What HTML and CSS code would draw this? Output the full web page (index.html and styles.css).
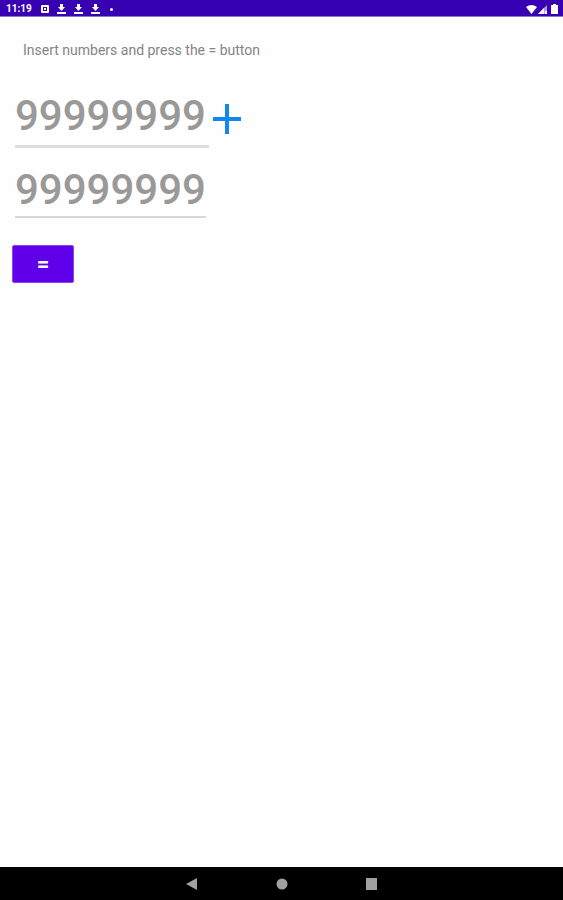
FILE: index.html
```html
<!DOCTYPE html>
<html lang="en">
<head>
<meta charset="utf-8">
<meta name="viewport" content="width=device-width, initial-scale=1">
<title>Calculator</title>
<link rel="stylesheet" href="styles.css">
</head>
<body>
<header class="status">
  <span class="time">11:19</span>
  <svg class="notifications" width="74" height="10" viewBox="0 0 74 10" aria-hidden="true">
    <path fill-rule="evenodd" d="M2 1h6q1 0 1 1v6q0 1-1 1H2q-1 0-1-1V2q0-1 1-1zM3 3v4h4V3z"/>
    <path d="M4 4h2v2H4z"/>
    <path d="M20 0h3v3h2l-3.500 4L18 3h2zM17 8h9v2h-9z"/>
    <path d="M37 0h3v3h2l-3.500 4L35 3h2zM34 8h9v2h-9z"/>
    <path d="M54 0h3v3h2l-3.500 4L52 3h2zM51 8h9v2h-9z"/>
    <circle cx="71.500" cy="5.500" r="1.500"/>
  </svg>
  <svg class="system" width="34" height="10" viewBox="0 0 34 10" aria-hidden="true">
    <path d="M1 3q5.500-4 11 0L6.500 10z"/>
    <path opacity=".6" d="M13 10l9-9v9z"/>
    <path d="M13 10l6-6v6zM20 7h2v3h-2z"/>
    <path d="M26 1h2V0h3v1h2v9h-7z"/>
  </svg>
</header>
<main class="content">
  <p class="hint">Insert numbers and press the = button</p>
  <div class="row">
    <input class="number first" type="text" inputmode="numeric" placeholder="99999999" aria-label="First number">
    <svg class="plus" width="28" height="30" viewBox="0 0 28 30" role="img" aria-label="plus"><path d="M12 0h4v13h12v4H16v13h-4V17H0v-4h12z"/></svg>
  </div>
  <input class="number second" type="text" inputmode="numeric" placeholder="99999999" aria-label="Second number">
  <button class="equals" type="button">=</button>
</main>
<nav class="navbar">
  <button type="button" aria-label="Back"><svg width="12" height="12" viewBox="0 0 12 12"><path d="M0 6l11-6v12z"/></svg></button>
  <button type="button" aria-label="Home"><svg width="12" height="12" viewBox="0 0 12 12"><circle cx="6" cy="6" r="5.500"/></svg></button>
  <button type="button" aria-label="Recent apps"><svg width="12" height="12" viewBox="0 0 12 12"><path d="M0 0h11v12H0z"/></svg></button>
</nav>
</body>
</html>
```

FILE: styles.css
```css
* {
  box-sizing: border-box;
}

body {
  margin: 0;
  min-height: 100vh;
  display: flex;
  flex-direction: column;
  background: #fefefe;
  font-family: Roboto, "Liberation Sans", sans-serif;
}

.status {
  height: 17px;
  display: flex;
  align-items: center;
  gap: 8px;
  padding: 1px 4px 0 6px;
  background: #3700b3;
  border-bottom: 1px solid #8f75d2;
  color: #fff;
  fill: #fff;
}

.time {
  font-size: 10px;
  line-height: 16px;
  font-weight: 700;
}

.system {
  margin-left: auto;
}

.content {
  flex: 1;
  display: flex;
  flex-direction: column;
  align-items: flex-start;
  padding: 23px 12px;
}

.hint {
  margin: 0 0 32px 11px;
  font-size: 14px;
  line-height: 20px;
  color: #858585;
}

.row {
  display: flex;
  align-items: flex-start;
  gap: 4px;
}

.number {
  display: block;
  margin: 0 0 0 3px;
  padding: 0;
  border: 0;
  border-radius: 0;
  background: transparent;
  font: 500 42px/48px Roboto, "Liberation Sans", sans-serif;
  color: #666;
  outline: 0;
}

.number::placeholder {
  color: #999;
  opacity: 1;
}

.first {
  width: 194px;
  height: 56px;
  padding-bottom: 6px;
  border-bottom: 3px solid #dedede;
}

.second {
  width: 191px;
  height: 52px;
  margin-top: 18px;
  padding-bottom: 3px;
  border-bottom: 2px solid #d8d8d8;
}

.plus {
  margin-top: 12px;
  fill: #1088f0;
}

.equals {
  width: 62px;
  height: 38px;
  margin-top: 27px;
  padding: 0;
  border: 1px solid #8a48f0;
  border-radius: 2px;
  background: #6000ea;
  color: #fff;
  font: 700 22px/36px Roboto, "Liberation Sans", sans-serif;
}

.navbar {
  height: 33px;
  display: flex;
  justify-content: center;
  gap: 50px;
  background: #000;
}

.navbar button {
  width: 40px;
  padding: 0;
  border: 0;
  background: transparent;
  display: flex;
  align-items: center;
  justify-content: center;
  fill: #a0a0a0;
}
```
